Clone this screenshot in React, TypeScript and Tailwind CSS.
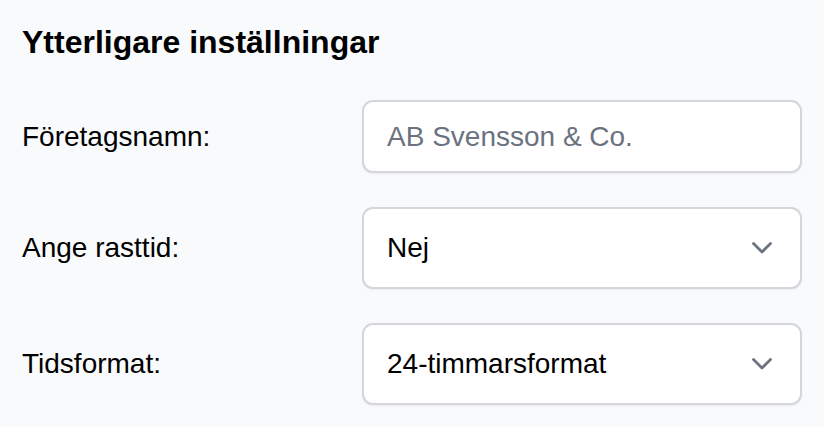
import React from "react";

function Chevron() {
  return (
    <svg width="22" height="14" viewBox="0 0 22 14" fill="none" className="shrink-0">
      <path d="M2.5 2.5 L11 11 L19.5 2.5" stroke="#6b7280" strokeWidth="2.8" strokeLinecap="round" strokeLinejoin="round" />
    </svg>
  );
}

function Row({ label, children }: { label: string; children: React.ReactNode }) {
  return (
    <div className="flex items-center">
      <div className="w-[340px] shrink-0 text-[28px] text-black">{label}</div>
      <div className="flex-1">{children}</div>
    </div>
  );
}

function SelectBox({ value }: { value: string }) {
  return (
    <div className="flex h-[82px] items-center justify-between rounded-[11px] border-2 border-[#d4d6dc] bg-white pl-[23px] pr-[27px] shadow-[0_1px_2px_rgba(0,0,0,0.06)]">
      <span className="text-[28px] text-black">{value}</span>
      <Chevron />
    </div>
  );
}

export default function App() {
  return (
    <div
      className="min-h-[426px] w-full bg-[#f9fafb] px-[22px] pt-[22px]"
      style={{ fontFamily: '"Liberation Sans", Arial, sans-serif' }}
    >
      <h2 className="text-[32px] font-bold leading-[40px] text-black">Ytterligare inställningar</h2>
      <div className="mt-[38px] flex flex-col gap-[34px]">
        <Row label="Företagsnamn:">
          <div className="flex h-[73px] items-center rounded-[11px] border-2 border-[#d4d6dc] bg-white pl-[23px] shadow-[0_1px_2px_rgba(0,0,0,0.06)]">
            <span className="text-[28px] text-[#6b7280]">AB Svensson &amp; Co.</span>
          </div>
        </Row>
        <Row label="Ange rasttid:">
          <SelectBox value="Nej" />
        </Row>
        <Row label="Tidsformat:">
          <SelectBox value="24-timmarsformat" />
        </Row>
      </div>
    </div>
  );
}
